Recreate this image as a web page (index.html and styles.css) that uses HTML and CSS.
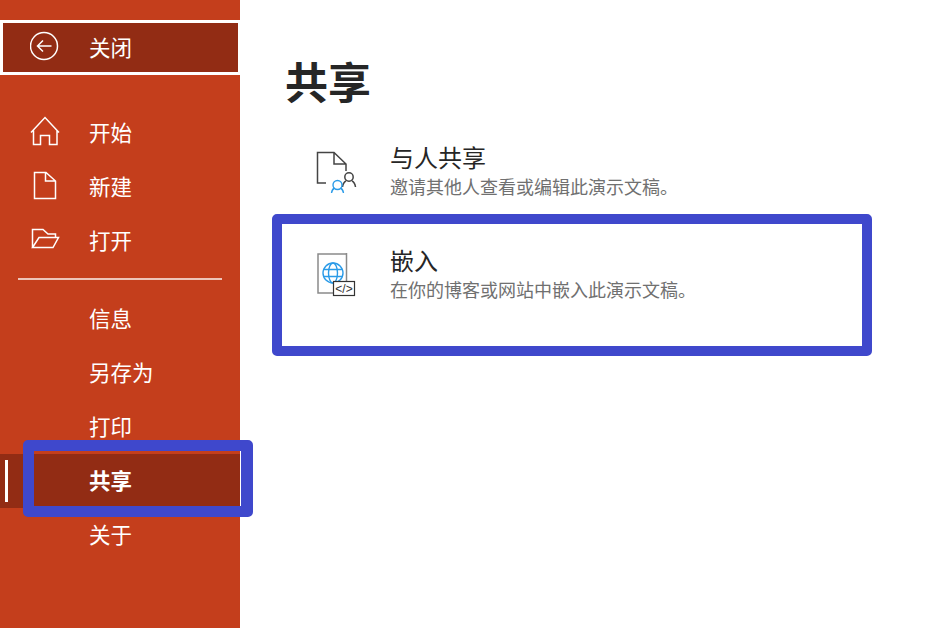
FILE: index.html
```html
<!DOCTYPE html>
<html lang="zh-CN">
    <head>
        <meta charset="UTF-8" />
        <meta name="viewport" content="width=device-width, initial-scale=1.0" />
        <title>共享</title>
        <link rel="stylesheet" href="styles.css">
    </head>

    <body>
        <div class="page">
            <nav class="sidebar">
                <a class="close-button">
                    <svg class="nav-icon" width="30" height="35" viewBox="0 0 30 35">
                        <circle cx="14" cy="16" r="13.5" />
                        <path d="M13 10.5 7.5 16l5.5 5.5M7.5 16H21.5" />
                    </svg>
                    <span class="nav-label close-label">关闭</span>
                </a>

                <div class="nav-group">
                    <a class="nav-item">
                        <svg class="nav-icon" width="30" height="36" viewBox="0 0 30 36">
                            <path d="M1 17.5 15 2.5l14 15M3.5 15.5V29.5H10.5V20.5H19.5V29.5H27V15.5" />
                        </svg>
                        <span class="nav-label">开始</span>
                    </a>
                    <a class="nav-item">
                        <svg class="nav-icon" width="30" height="36" viewBox="0 0 30 36">
                            <path d="M4.5 3.5H16l9.5 8.5V29.5H4.5ZM15.5 3.5V12H25.5" />
                        </svg>
                        <span class="nav-label">新建</span>
                    </a>
                    <a class="nav-item">
                        <svg class="nav-icon" width="30" height="36" viewBox="0 0 30 36">
                            <path d="M2.5 24.5V6.5H13l5 4.5H25.5V14M2.5 24.5H23L28.5 14.5H9Z" />
                        </svg>
                        <span class="nav-label">打开</span>
                    </a>
                </div>

                <div class="divider"></div>

                <div class="nav-group">
                    <a class="nav-item text-only"><span class="nav-label">信息</span></a>
                    <a class="nav-item text-only"><span class="nav-label">另存为</span></a>
                    <a class="nav-item text-only"><span class="nav-label">打印</span></a>
                    <a class="nav-item text-only selected">
                        <span class="selected-bar"></span>
                        <span class="nav-label">共享</span>
                        <span class="mark-nav"></span>
                    </a>
                    <a class="nav-item text-only"><span class="nav-label">关于</span></a>
                </div>
            </nav>

            <main class="content">
                <h1 class="title">共享</h1>

                <div class="share-item">
                    <svg class="share-icon" width="44" height="44" viewBox="0 0 44 44">
                        <path class="stroke-dark" d="M10 33H1.5V2.5H18L30 14V21M18 2.500V14H30" />
                        <circle class="stroke-dark" cx="33" cy="27" r="4.200" />
                        <path class="stroke-dark" d="M26.500 37c.5-3.500 2.500-5.500 3.500-6M39.500 37c-.5-3.500-2.500-5.500-3.500-6" />
                        <circle class="stroke-blue" cx="21.500" cy="35" r="4.500" />
                        <path class="stroke-blue" d="M15.500 43c.5-3 2-4.500 3-5M27.500 43c-.5-3-2-4.500-3-5" />
                    </svg>
                    <div>
                        <div class="share-name">与人共享</div>
                        <div class="share-desc">邀请其他人查看或编辑此演示文稿。</div>
                    </div>
                </div>

                <div class="share-item marked">
                    <svg class="share-icon" width="44" height="44" viewBox="0 0 44 44">
                        <path class="stroke-gray" d="M30 1H2V40H18" />
                        <path class="stroke-gray" d="M30.500 0V28" />
                        <circle class="stroke-blue" cx="17" cy="20" r="10" />
                        <ellipse class="stroke-blue" cx="17" cy="20" rx="4.500" ry="10" />
                        <path class="stroke-blue" d="M7.500 16.500H26.500M7.500 23.500H26.500" />
                        <rect class="code-box" x="17.500" y="28.500" width="21" height="14" />
                        <text class="code-text" x="28" y="40">&lt;/&gt;</text>
                    </svg>
                    <div>
                        <div class="share-name">嵌入</div>
                        <div class="share-desc">在你的博客或网站中嵌入此演示文稿。</div>
                    </div>
                </div>
            </main>
        </div>
    </body>
</html>
```

FILE: styles.css
```css
* {
    box-sizing: border-box;
}

body {
    margin: 0;
    padding: 0;
    background-color: white;
    font-family: "Noto Sans CJK SC", "Liberation Sans", sans-serif;
}

.page {
    display: flex;
    height: 628px;
    overflow: hidden;
}

.sidebar {
    width: 240px;
    flex-shrink: 0;
    padding-top: 20px;
    background-color: #c43e1c;
    color: white;
    font-size: 21.5px;
}

.close-button {
    display: flex;
    align-items: center;
    gap: 29px;
    height: 55px;
    padding-left: 27px;
    border: solid 3px white;
    border-right-width: 2px;
    background-color: #922c14;
}

.nav-group {
    display: flex;
    flex-direction: column;
}

.close-button + .nav-group {
    margin-top: 31px;
}

.nav-item {
    display: flex;
    align-items: center;
    gap: 29px;
    height: 54px;
    padding-left: 30px;
}

.nav-item.text-only {
    padding-left: 89px;
}

/* the CJK font sits low in its line box */
.nav-label {
    margin-bottom: 4px;
}

.close-label {
    margin-bottom: 2px;
}

.nav-icon {
    fill: none;
    stroke: white;
    stroke-width: 1.500;
}

.divider {
    height: 2px;
    margin: 10px 18px 12px;
    background-color: #edc4b9;
}

.selected {
    position: relative;
    background-color: #922c14;
    font-weight: 700;
}

.selected-bar {
    position: absolute;
    left: 5px;
    top: 6px;
    bottom: 6px;
    width: 3px;
    background-color: white;
}

/* blue annotation box drawn over the selected row */
.mark-nav {
    position: absolute;
    left: 23px;
    right: -13px;
    top: -14px;
    bottom: -9px;
    border: solid 11px #3f48cc;
    border-right-width: 12px;
    border-radius: 5px;
}

.content {
    flex: 1;
    padding: 59px 0 0 32px;
}

.title {
    margin: 0 0 10px 13px;
    font-size: 43px;
    line-height: 42px;
    font-weight: 700;
    color: #262626;
}

.share-item {
    display: flex;
    align-items: flex-start;
    gap: 30px;
    width: 600px;
    padding: 21px 0 6px 34px;
    border: solid 10px transparent;
}

.share-item.marked {
    padding-bottom: 45px;
    border-color: #3f48cc;
    border-radius: 5px;
}

.share-icon {
    flex-shrink: 0;
    margin-top: 8px;
    fill: none;
}

.stroke-dark {
    stroke: #444444;
    stroke-width: 1.500;
}

.stroke-blue {
    stroke: #2b9be8;
    stroke-width: 1.400;
}

.stroke-gray {
    stroke: #8a8a8a;
    stroke-width: 1.500;
}

.code-box {
    fill: white;
    stroke: #333333;
    stroke-width: 1.200;
}

.code-text {
    fill: #333333;
    font-family: "Liberation Sans", sans-serif;
    font-size: 12px;
    text-anchor: middle;
}

.share-name {
    margin-bottom: 2px;
    font-size: 24px;
    line-height: 30px;
    color: #262626;
}

.share-desc {
    font-size: 18px;
    line-height: 24px;
    color: #707070;
}
```
